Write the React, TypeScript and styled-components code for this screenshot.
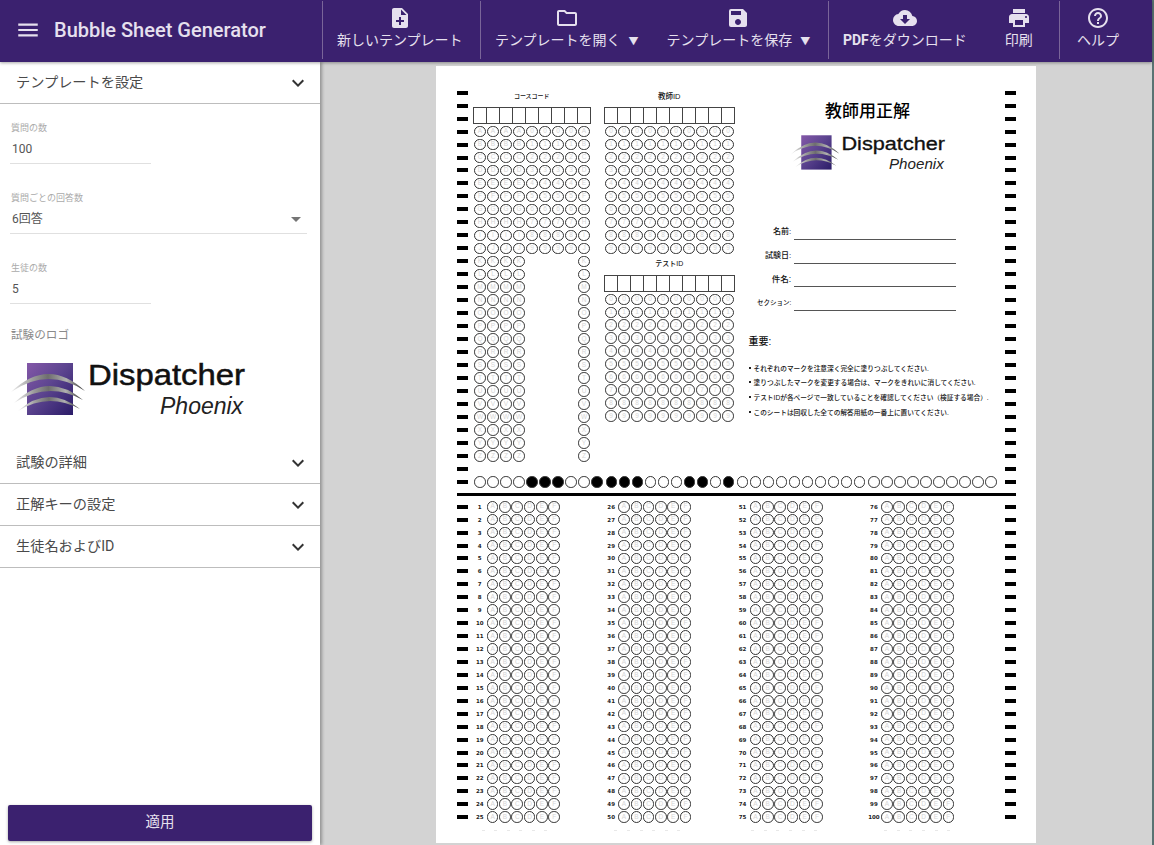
import React from "react";
import styled, { createGlobalStyle } from "styled-components";
import {
  MdMenu,
  MdNoteAdd,
  MdOutlineFolder,
  MdSave,
  MdCloudDownload,
  MdPrint,
  MdHelpOutline,
  MdKeyboardArrowDown,
} from "react-icons/md";

const PURPLE = "#3b216f";
const TOP_PITCH = 12.97;
const ANSWER_PITCH = 12.94;
const UI_FONT = `Roboto, "Noto Sans CJK JP", sans-serif`;
const SHEET_FONT = `"Liberation Sans", "Noto Sans CJK JP", sans-serif`;

const GlobalStyle = createGlobalStyle`
  html, body {
    margin: 0;
    padding: 0;
    overflow: hidden;
    background: #5a7373;
  }
  * {
    box-sizing: border-box;
  }
`;

const Page = styled.div`
  width: 1152px;
  height: 845px;
  display: flex;
  flex-direction: column;
  font-family: ${UI_FONT};
  background: #d3d3d3;
`;

const TopBar = styled.header`
  height: 62px;
  flex: none;
  display: flex;
  align-items: stretch;
  background: ${PURPLE};
  color: #e6e0ee;
  box-shadow: 0 1px 3px rgba(0, 0, 0, 0.35);
  position: relative;
  z-index: 3;
`;

const Brand = styled.div`
  width: 322px;
  flex: none;
  display: flex;
  align-items: center;
  padding: 0 0 2px 15px;
  gap: 13px;
  font-size: 20px;
  font-weight: 500;
  white-space: nowrap;
`;

const ToolGroup = styled.div<{ $width: number; $pad: number; $gap?: number }>`
  width: ${(p) => p.$width}px;
  flex: none;
  display: flex;
  gap: ${(p) => p.$gap ?? 0}px;
  padding-left: ${(p) => p.$pad}px;
  margin: 1px 0 3px;
  border-left: 1px solid #7a6599;
`;

const ToolButton = styled.div`
  display: flex;
  flex-direction: column;
  align-items: center;
  padding-top: 5px;
  font-size: 14px;
  line-height: 20px;
  white-space: nowrap;
  svg {
    width: 24px;
    height: 24px;
    margin-bottom: 0;
  }
`;

const Caret = styled.span`
  font-size: 10px;
  margin-left: 8px;
`;

const Main = styled.div`
  flex: 1;
  min-height: 0;
  display: flex;
`;

const Sidebar = styled.aside`
  width: 320px;
  flex: none;
  display: flex;
  flex-direction: column;
  background: #fff;
  box-shadow: 2px 0 3px rgba(0, 0, 0, 0.3);
  position: relative;
  z-index: 2;
`;

const AccordionRow = styled.div`
  height: 42px;
  flex: none;
  display: flex;
  align-items: center;
  justify-content: space-between;
  padding: 0 10px 4px 16px;
  font-size: 14.2px;
  color: #4a4a4a;
  border-bottom: 1px solid #bdbdbd;
  svg {
    width: 24px;
    height: 24px;
    margin-top: 4px;
    color: #333;
  }
`;

const Settings = styled.div`
  flex: none;
  height: 338px;
  padding: 17px 0 0 11px;
`;

const Field = styled.div<{ $wide?: boolean }>`
  width: ${(p) => (p.$wide ? 297 : 141)}px;
  margin-left: -1px;
  height: 70px;
`;

const FieldLabel = styled.div`
  font-size: 9px;
  line-height: 14px;
  padding-left: 1px;
  color: #aaa;
`;

const FieldValue = styled.div`
  height: 29px;
  padding: 4px 0 0 2px;
  line-height: 20px;
  font-size: 12px;
  color: #555;
  border-bottom: 1px solid #e0e0e0;
  display: flex;
  justify-content: space-between;
`;

const SelectArrow = styled.span`
  width: 0;
  height: 0;
  margin: 8px 6px 0 0;
  border-left: 5px solid transparent;
  border-right: 5px solid transparent;
  border-top: 5px solid #757575;
`;

const LogoLabel = styled.div`
  font-size: 11.6px;
  line-height: 16px;
  margin-top: -4px;
  color: #8a8a8a;
`;

const SidebarLogo = styled.div`
  margin: 12px 0 0 -1px;
`;

const Footer = styled.div`
  margin-top: auto;
  padding: 0 8px 4px;
`;

const ApplyButton = styled.div`
  height: 36px;
  padding-bottom: 5px;
  display: flex;
  align-items: center;
  justify-content: center;
  border-radius: 2px;
  background: ${PURPLE};
  color: #e6e0ee;
  font-size: 14.5px;
  box-shadow: 0 1px 3px rgba(0, 0, 0, 0.35);
`;

const Workspace = styled.main`
  flex: 1;
  display: flex;
  justify-content: center;
  padding-top: 4px;
`;

const Paper = styled.div`
  width: 600px;
  height: 777px;
  padding: 20.2px 20px 0 21px;
  background: #fff;
  font-family: ${SHEET_FONT};
  color: #111;
`;

const SheetRow = styled.div`
  display: flex;
  justify-content: space-between;
`;

const MarkColumn = styled.div`
  flex: none;
  width: 11px;
`;

const Mark = styled.div<{ $pitch: number }>`
  height: ${(p) => p.$pitch}px;
  display: flex;
  align-items: center;
  &::before {
    content: "";
    width: 11px;
    height: 4px;
    background: #000;
  }
`;

const TopBody = styled.div`
  width: 537px;
  display: flex;
  flex-direction: column;
`;

const Upper = styled.div`
  height: ${30 * TOP_PITCH}px;
  display: flex;
  padding-left: 5px;
`;

const CodeBlock = styled.div<{ $lift?: boolean }>`
  margin-top: ${(p) => (p.$lift ? -1 : 0)}px;
`;

const CodeTitle = styled.div<{ $size: number }>`
  height: 20.8px;
  padding-bottom: 3px;
  display: flex;
  align-items: center;
  justify-content: center;
  font-size: ${(p) => p.$size}px;
  font-weight: 500;
`;

const BoxRow = styled.div`
  display: flex;
  height: 17px;
  margin-bottom: 1.2px;
  border: 1px solid #444;
  border-left: none;
`;

const Box = styled.div`
  flex: 1;
  min-width: 0;
  border-left: 1px solid #444;
`;

const BubbleGrid = styled.div<{ $cols: number }>`
  display: grid;
  grid-template-columns: repeat(${(p) => p.$cols}, 13px);
  grid-auto-rows: ${TOP_PITCH}px;
  padding-left: 0.5px;
`;

const Cell = styled.div`
  display: flex;
  align-items: center;
  justify-content: center;
`;

const Bubble = styled.div<{ $filled?: boolean }>`
  flex: none;
  width: 11.6px;
  height: 11.6px;
  display: flex;
  align-items: center;
  justify-content: center;
  border: 1px solid #333;
  border-radius: 50%;
  font-size: 6.5px;
  line-height: 1;
  color: #d6d6d6;
  background: ${(p) => (p.$filled ? "#000" : "transparent")};
`;

const DigitsColumn = styled.div`
  margin-left: 13.5px;
  flex: none;
`;

const InfoPanel = styled.div`
  width: 266px;
  flex: none;
  display: flex;
  flex-direction: column;
`;

const SheetTitle = styled.div`
  margin-top: 15.8px;
  height: 20px;
  line-height: 20px;
  text-align: center;
  font-size: 17px;
  font-weight: 500;
  color: #000;
`;

const SheetLogo = styled.div`
  margin-top: 7.7px;
  padding-left: 3.3px;
  display: flex;
  justify-content: center;
`;

const NameRows = styled.div`
  margin-top: 42.8px;
`;

const NameRow = styled.div`
  height: 23.8px;
  display: flex;
  align-items: stretch;
`;

const NameLabel = styled.div<{ $size: number }>`
  width: 56.7px;
  padding-bottom: 3px;
  align-self: flex-end;
  text-align: right;
  font-size: ${(p) => p.$size}px;
  line-height: 10px;
  font-weight: 500;
  white-space: nowrap;
`;

const NameLine = styled.div`
  width: 162px;
  margin-left: 3.3px;
  border-bottom: 1px solid #555;
`;

const NoticeTitle = styled.div`
  margin: 23.6px 0 0 14px;
  font-size: 10px;
  line-height: 14px;
  font-weight: 500;
`;

const NoticeList = styled.ul`
  list-style: none;
  margin: 11.7px 0 0 14px;
  padding: 0;
`;

const NoticeItem = styled.li`
  height: 14.67px;
  display: flex;
  align-items: center;
  gap: 3px;
  font-size: 6.7px;
  font-weight: 500;
  white-space: nowrap;
  &::before {
    content: "";
    width: 2px;
    height: 2px;
    background: #222;
  }
`;

const TimingRow = styled.div`
  height: ${TOP_PITCH}px;
  display: flex;
  gap: 1.3px;
  padding-left: 5.5px;
`;

const TimingGroup = styled.div`
  display: grid;
  grid-template-columns: repeat(10, 13px);
`;

const Rule = styled.div`
  height: 3px;
  margin: 4.3px 0 4.7px;
  background: #000;
`;

const AnswerGrid = styled.div`
  width: 537px;
  padding-left: 5px;
  display: grid;
  grid-template-columns: repeat(4, 131.4px);
`;

const AnswerColumn = styled.div`
  display: flex;
  flex-direction: column;
`;

const AnswerRow = styled.div`
  height: ${ANSWER_PITCH}px;
  display: flex;
  align-items: center;
`;

const AnswerNumber = styled.div`
  width: 13.5px;
  flex: none;
  text-align: center;
  font-family: "DejaVu Sans", sans-serif;
  font-size: 5.5px;
  font-weight: 700;
  color: #222;
`;

const AnswerCell = styled.div`
  width: 12.3px;
  flex: none;
  display: flex;
  justify-content: center;
`;

const CutRow = styled.div<{ $offset: number }>`
  height: 1px;
  margin-top: 6px;
  padding-left: ${(p) => p.$offset}px;
  display: flex;
  gap: 9.6px;
`;

const CutDash = styled.div`
  width: 3px;
  height: 1px;
  background: #e8e8e8;
`;

type LogoProps = { scale: number; id: string };

// drawn logo, the words stay real text
function Logo({ scale, id }: LogoProps) {
  return (
    <svg width={240 * scale} height={66 * scale} viewBox="0 -6 240 66">
      <defs>
        <linearGradient id={`${id}-box`} x1="0" y1="0" x2="1" y2="1">
          <stop offset="0" stopColor="#8458a8" />
          <stop offset="0.45" stopColor="#5d4590" />
          <stop offset="1" stopColor="#2b1c68" />
        </linearGradient>
        <linearGradient id={`${id}-arc`} x1="0" y1="0" x2="1" y2="0">
          <stop offset="0" stopColor="#f0f0f0" />
          <stop offset="0.3" stopColor="#999" />
          <stop offset="0.5" stopColor="#6e6e6e" />
          <stop offset="0.75" stopColor="#b0b0b0" />
          <stop offset="1" stopColor="#333" />
        </linearGradient>
      </defs>
      <rect x="17" y="2" width="46" height="52" fill={`url(#${id}-box)`} />
      <path d="M1 31Q38 -4.5 75 30Q38 5.5 1 31Z" fill={`url(#${id}-arc)`} />
      <path d="M4 42Q38 9.5 73 39Q38 19.5 4 42Z" fill={`url(#${id}-arc)`} />
      <path d="M8 50Q38 23 70 48Q38 31 8 50Z" fill={`url(#${id}-arc)`} />
      <text
        x="78"
        y="24"
        fontFamily="Liberation Sans, sans-serif"
        fontSize="29"
        textLength="157"
        lengthAdjust="spacingAndGlyphs"
        fill="#111"
        stroke="#111"
        strokeWidth="0.5"
      >
        Dispatcher
      </text>
      <text x="150" y="53" fontFamily="Liberation Sans, sans-serif" fontSize="23" fontStyle="italic" fill="#222">
        Phoenix
      </text>
    </svg>
  );
}

const LETTERS = "ABCDEFGHIJKLMNOPQRSTUVWXYZ".split("");
const CHOICES = ["A", "B", "C", "D", "E", "F"];
const FILLED = [4, 5, 6, 9, 10, 11, 12, 16, 17, 19];
const CUT_OFFSETS = [8.5, 10.1, 15.5, 17];

const courseRows = LETTERS.map((letter, row) => [
  letter,
  letter,
  letter,
  letter,
  row < 10 ? String(row) : "",
  row < 10 ? String(row) : "",
  row < 10 ? String(row) : "",
  row < 10 ? String(row) : "",
  letter,
]);

const digitRows = Array.from({ length: 10 }, (_, row) => Array(10).fill(String(row)) as string[]);

const nameFields = [
  { label: "名前:", size: 8 },
  { label: "試験日:", size: 8 },
  { label: "件名:", size: 8.5 },
  { label: "セクション:", size: 6.5 },
];

const notices = [
  "それぞれのマークを注意深く完全に塗りつぶしてください.",
  "塗りつぶしたマークを変更する場合は、マークをきれいに消してください.",
  "テストIDが各ページで一致していることを確認してください（検証する場合）.",
  "このシートは回収した全ての解答用紙の一番上に置いてください.",
];

function Marks({ count, pitch }: { count: number; pitch: number }) {
  return (
    <MarkColumn>
      {Array.from({ length: count }, (_, i) => (
        <Mark key={i} $pitch={pitch} />
      ))}
    </MarkColumn>
  );
}

type CodeEntryProps = { title: string; titleSize?: number; rows: string[][]; lift?: boolean };

function CodeEntry({ title, titleSize = 7.5, rows, lift }: CodeEntryProps) {
  const cols = rows[0].length;
  return (
    <CodeBlock $lift={lift}>
      <CodeTitle $size={titleSize}>{title}</CodeTitle>
      <BoxRow>
        {rows[0].map((_, i) => (
          <Box key={i} />
        ))}
      </BoxRow>
      <BubbleGrid $cols={cols}>
        {rows.flat().map((value, i) => (
          <Cell key={i}>{value && <Bubble>{value}</Bubble>}</Cell>
        ))}
      </BubbleGrid>
    </CodeBlock>
  );
}

export default function App() {
  return (
    <>
      <GlobalStyle />
      <Page>
        <TopBar>
          <Brand>
            <MdMenu size={26} />
            Bubble Sheet Generator
          </Brand>
          <ToolGroup $width={158} $pad={14}>
            <ToolButton>
              <MdNoteAdd />
              新しいテンプレート
            </ToolButton>
          </ToolGroup>
          <ToolGroup $width={348} $pad={14} $gap={28}>
            <ToolButton>
              <MdOutlineFolder />
              <span>
                テンプレートを開く<Caret>▼</Caret>
              </span>
            </ToolButton>
            <ToolButton>
              <MdSave />
              <span>
                テンプレートを保存<Caret>▼</Caret>
              </span>
            </ToolButton>
          </ToolGroup>
          <ToolGroup $width={231} $pad={14} $gap={38}>
            <ToolButton>
              <MdCloudDownload />
              <span>
                <b>PDF</b>をダウンロード
              </span>
            </ToolButton>
            <ToolButton>
              <MdPrint />
              印刷
            </ToolButton>
          </ToolGroup>
          <ToolGroup $width={93} $pad={17}>
            <ToolButton>
              <MdHelpOutline />
              ヘルプ
            </ToolButton>
          </ToolGroup>
        </TopBar>
        <Main>
          <Sidebar>
            <AccordionRow>
              テンプレートを設定
              <MdKeyboardArrowDown />
            </AccordionRow>
            <Settings>
              <Field>
                <FieldLabel>質問の数</FieldLabel>
                <FieldValue>100</FieldValue>
              </Field>
              <Field $wide>
                <FieldLabel>質問ごとの回答数</FieldLabel>
                <FieldValue>
                  6回答
                  <SelectArrow />
                </FieldValue>
              </Field>
              <Field>
                <FieldLabel>生徒の数</FieldLabel>
                <FieldValue>5</FieldValue>
              </Field>
              <LogoLabel>試験のロゴ</LogoLabel>
              <SidebarLogo>
                <Logo scale={1} id="side" />
              </SidebarLogo>
            </Settings>
            <AccordionRow>
              試験の詳細
              <MdKeyboardArrowDown />
            </AccordionRow>
            <AccordionRow>
              正解キーの設定
              <MdKeyboardArrowDown />
            </AccordionRow>
            <AccordionRow>
              生徒名およびID
              <MdKeyboardArrowDown />
            </AccordionRow>
            <Footer>
              <ApplyButton>適用</ApplyButton>
            </Footer>
          </Sidebar>
          <Workspace>
            <Paper>
              <SheetRow>
                <Marks count={31} pitch={TOP_PITCH} />
                <TopBody>
                  <Upper>
                    <CodeEntry title="コースコード" titleSize={6} rows={courseRows} />
                    <DigitsColumn>
                      <CodeEntry title="教師ID" rows={digitRows} />
                      <CodeEntry title="テストID" titleSize={7} rows={digitRows} lift />
                    </DigitsColumn>
                    <InfoPanel>
                      <SheetTitle>教師用正解</SheetTitle>
                      <SheetLogo>
                        <Logo scale={0.66} id="sheet" />
                      </SheetLogo>
                      <NameRows>
                        {nameFields.map((field) => (
                          <NameRow key={field.label}>
                            <NameLabel $size={field.size}>{field.label}</NameLabel>
                            <NameLine />
                          </NameRow>
                        ))}
                      </NameRows>
                      <NoticeTitle>重要:</NoticeTitle>
                      <NoticeList>
                        {notices.map((text) => (
                          <NoticeItem key={text}>{text}</NoticeItem>
                        ))}
                      </NoticeList>
                    </InfoPanel>
                  </Upper>
                  <TimingRow>
                    {[0, 1, 2, 3].map((group) => (
                      <TimingGroup key={group}>
                        {Array.from({ length: 10 }, (_, i) => (
                          <Cell key={i}>
                            <Bubble $filled={FILLED.includes(group * 10 + i)} />
                          </Cell>
                        ))}
                      </TimingGroup>
                    ))}
                  </TimingRow>
                </TopBody>
                <Marks count={31} pitch={TOP_PITCH} />
              </SheetRow>
              <Rule />
              <SheetRow>
                <Marks count={25} pitch={ANSWER_PITCH} />
                <AnswerGrid>
                  {[0, 1, 2, 3].map((col) => (
                    <AnswerColumn key={col}>
                      {Array.from({ length: 25 }, (_, row) => (
                        <AnswerRow key={row}>
                          <AnswerNumber>{col * 25 + row + 1}</AnswerNumber>
                          {CHOICES.map((choice) => (
                            <AnswerCell key={choice}>
                              <Bubble>{choice}</Bubble>
                            </AnswerCell>
                          ))}
                        </AnswerRow>
                      ))}
                      <CutRow $offset={CUT_OFFSETS[col]}>
                        {CHOICES.map((choice) => (
                          <CutDash key={choice} />
                        ))}
                      </CutRow>
                    </AnswerColumn>
                  ))}
                </AnswerGrid>
                <Marks count={25} pitch={ANSWER_PITCH} />
              </SheetRow>
            </Paper>
          </Workspace>
        </Main>
      </Page>
    </>
  );
}
